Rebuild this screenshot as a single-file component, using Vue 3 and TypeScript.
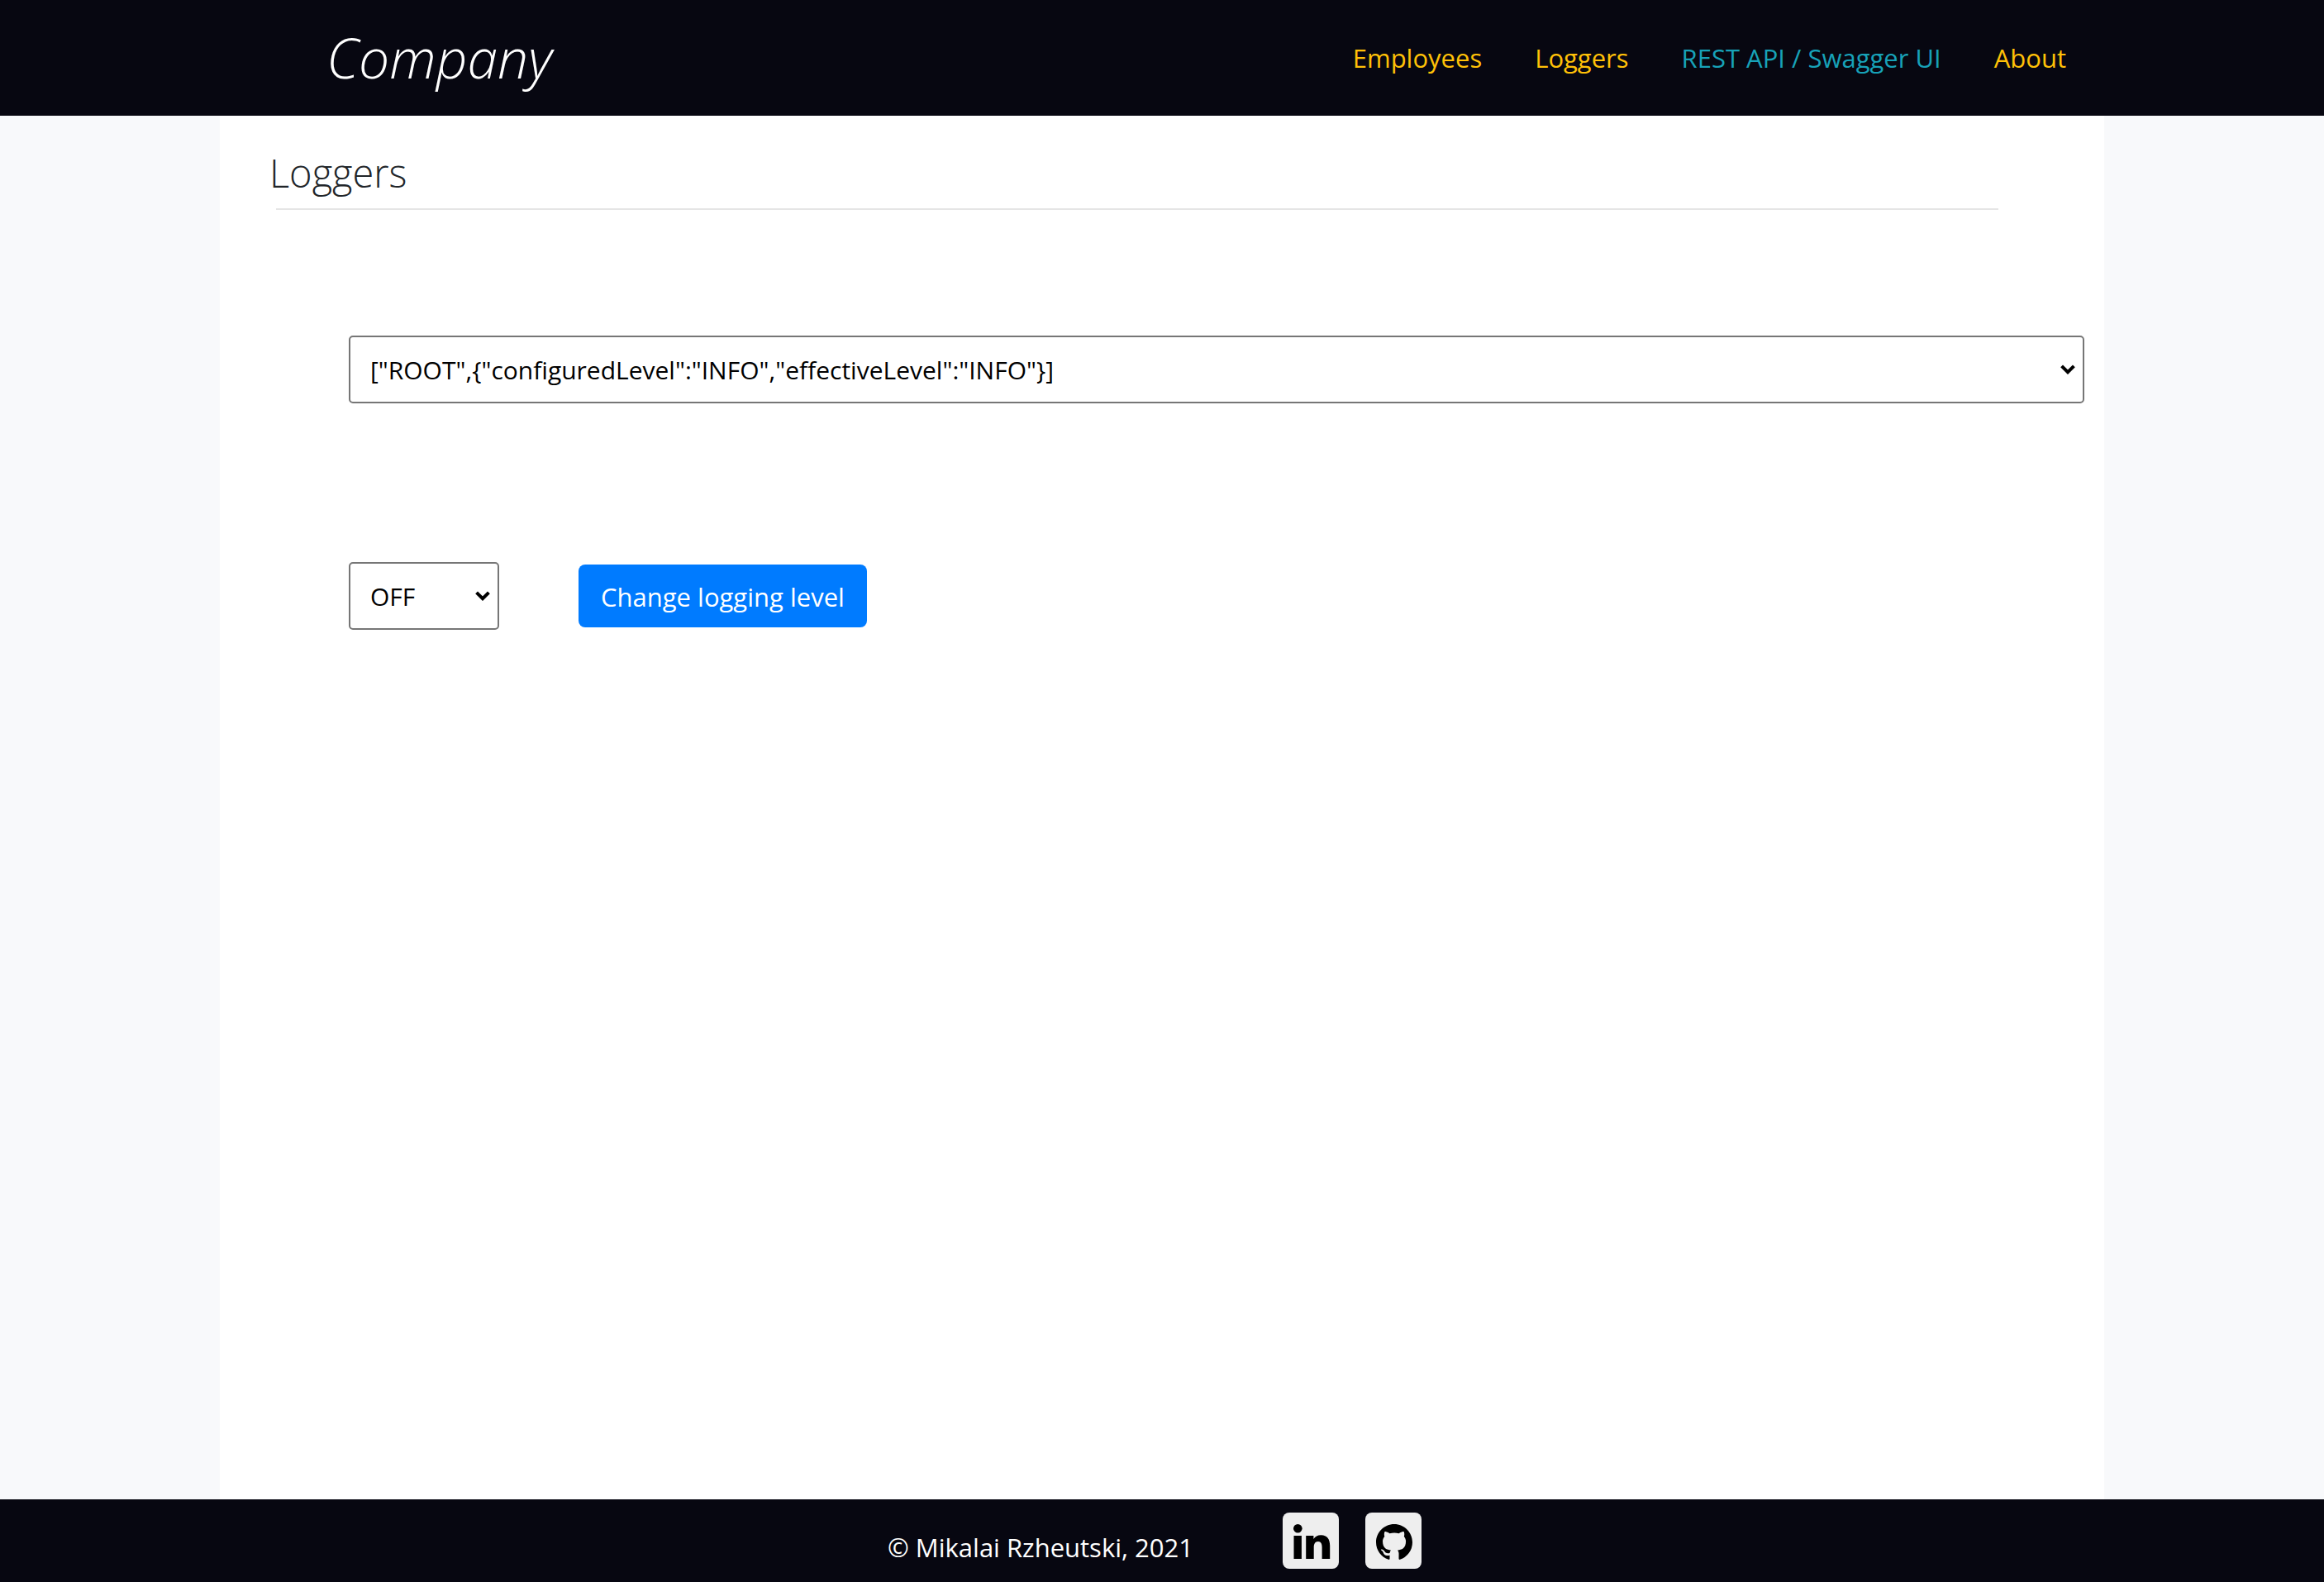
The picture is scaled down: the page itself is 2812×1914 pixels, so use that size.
<script setup lang="ts">
import { ref } from 'vue'

interface NavLink {
  label: string
  href: string
  info?: boolean
}

const links: NavLink[] = [
  { label: 'Employees', href: '#employees' },
  { label: 'Loggers', href: '#loggers' },
  { label: 'REST API / Swagger UI', href: '#swagger', info: true },
  { label: 'About', href: '#about' },
]

const levels: string[] = ['OFF', 'ERROR', 'WARN', 'INFO', 'DEBUG', 'TRACE']
const loggers = ref<string[]>(['["ROOT",{"configuredLevel":"INFO","effectiveLevel":"INFO"}]'])

const logger = ref(loggers.value[0])
const level = ref('OFF')

function changeLevel(): void {
  const updated = `["ROOT",{"configuredLevel":"${level.value}","effectiveLevel":"${level.value}"}]`
  loggers.value = [updated]
  logger.value = updated
}
</script>

<template>
  <div class="page">
    <header class="header">
      <div class="container header-inner">
        <a class="brand" href="#home">Company</a>
        <nav class="nav">
          <a v-for="link in links" :key="link.label" :href="link.href" :class="{ info: link.info }">{{ link.label }}</a>
        </nav>
      </div>
    </header>

    <main class="container main">
      <h1>Loggers</h1>
      <hr />
      <form @submit.prevent="changeLevel">
        <div class="select-wrap">
          <select v-model="logger" aria-label="Logger">
            <option v-for="item in loggers" :key="item" :value="item">{{ item }}</option>
          </select>
          <svg class="arrow" viewBox="0 0 18 12" aria-hidden="true"><path d="M1.6 1.8 9 9.2l7.400-7.400" /></svg>
        </div>
        <div class="row">
          <div class="select-wrap level">
            <select v-model="level" aria-label="Logging level">
              <option v-for="item in levels" :key="item" :value="item">{{ item }}</option>
            </select>
            <svg class="arrow" viewBox="0 0 18 12" aria-hidden="true"><path d="M1.6 1.8 9 9.2l7.400-7.400" /></svg>
          </div>
          <button type="submit">Change logging level</button>
        </div>
      </form>
    </main>

    <footer class="footer">
      <span class="copyright">© Mikalai Rzheutski, 2021</span>
      <div class="social">
        <a href="#linkedin" aria-label="LinkedIn">
          <svg viewBox="0 0 68 68">
            <circle cx="18.300" cy="19.300" r="5.300" />
            <path d="M13.500 28h9.400v28h-9.400zM28.200 28h9.200v4c1.800-3 5-4.800 9-4.800 7.500 0 10.800 5 10.800 12.800v16h-9.600V42c0-4-1.200-7-4.700-7-3.600 0-5.200 2.800-5.200 7v14h-9.500z" />
          </svg>
        </a>
        <a href="#github" aria-label="GitHub">
          <svg viewBox="0 0 68 68">
            <g transform="translate(13 14) scale(2.750)">
              <path d="M8 0C3.580 0 0 3.580 0 8c0 3.540 2.290 6.530 5.470 7.590.4.070.55-.17.55-.38 0-.19-.01-.82-.01-1.490-2.010.37-2.530-.49-2.690-.94-.09-.23-.48-.94-.82-1.130-.28-.15-.68-.52-.01-.53.63-.01 1.080.58 1.230.82.72 1.210 1.870.87 2.330.66.070-.52.28-.87.51-1.070-1.780-.2-3.640-.89-3.640-3.950 0-.87.31-1.590.82-2.150-.08-.2-.36-1.020.08-2.120 0 0 .67-.21 2.200.82.64-.18 1.320-.27 2-.27s1.360.09 2 .27c1.530-1.040 2.200-.82 2.200-.82.44 1.100.16 1.920.08 2.120.51.56.82 1.270.82 2.150 0 3.070-1.870 3.750-3.650 3.950.29.25.54.73.54 1.480 0 1.070-.01 1.930-.01 2.200 0 .21.15.46.55.38A8.010 8.010 0 0 0 16 8c0-4.420-3.580-8-8-8z" />
            </g>
          </svg>
        </a>
      </div>
    </footer>
  </div>
</template>

<style>
body {
  margin: 0;
  background: #f8f9fb;
}
</style>

<style scoped>
.page {
  display: flex;
  flex-direction: column;
  min-height: 100vh;
  font-family: "Open Sans", "Noto Sans", sans-serif;
  font-size: 31px;
  line-height: 48px;
  color: #212529;
}
.page *,
.page {
  box-sizing: border-box;
}
.container {
  width: 100%;
  max-width: 2280px;
  margin: 0 auto;
}
.header {
  background: #070711;
}
.header-inner {
  display: flex;
  align-items: center;
  justify-content: space-between;
  height: 140px;
  padding: 0 46px 0 129px;
}
a {
  text-decoration: none;
}
.brand {
  padding-bottom: 2px;
  color: #fff;
  font-size: 66px;
  font-weight: 300;
  font-style: italic;
  line-height: 96px;
}
.nav {
  display: flex;
  gap: 64px;
}
.nav a {
  color: #ffc107;
}
.nav a.info {
  color: #17a2b8;
}
.main {
  flex: 1;
  padding: 40px 24px 0 60px;
  background: #fff;
}
h1 {
  margin: 0;
  font-size: 47px;
  font-weight: 300;
  line-height: 58px;
}
hr {
  height: 2px;
  margin: 14px 104px 0 8px;
  border: 0;
  background: #e5e5e5;
}
form {
  padding: 152px 0 0 96px;
}
.select-wrap {
  display: grid;
  align-items: center;
}
.select-wrap > * {
  grid-area: 1 / 1;
}
select {
  width: 100%;
  height: 82px;
  margin: 0;
  padding: 2px 24px 0;
  border: 2px solid #767676;
  border-radius: 5px;
  background: #fff;
  color: #000;
  font: inherit;
  font-size: 30px;
  appearance: none;
}
.arrow {
  justify-self: end;
  width: 18px;
  height: 12px;
  margin-right: 11px;
  pointer-events: none;
  fill: none;
  stroke: #000;
  stroke-width: 4;
}
.row {
  display: flex;
  align-items: center;
  gap: 96px;
  margin-top: 192px;
}
.level {
  width: 182px;
}
button {
  height: 76px;
  padding: 2px 27px 0;
  border: 0;
  border-radius: 8px;
  background: #007bff;
  color: #fff;
  font: inherit;
}
.footer {
  display: flex;
  justify-content: center;
  gap: 108px;
  height: 100px;
  padding: 16px 18px 0 0;
  background: #070711;
  color: #fff;
}
.copyright {
  padding-top: 18px;
}
.social {
  display: flex;
  gap: 32px;
}
.social a {
  width: 68px;
  height: 68px;
  border-radius: 8px;
  background: #eee;
}
.social svg {
  display: block;
  fill: #000;
}
</style>
